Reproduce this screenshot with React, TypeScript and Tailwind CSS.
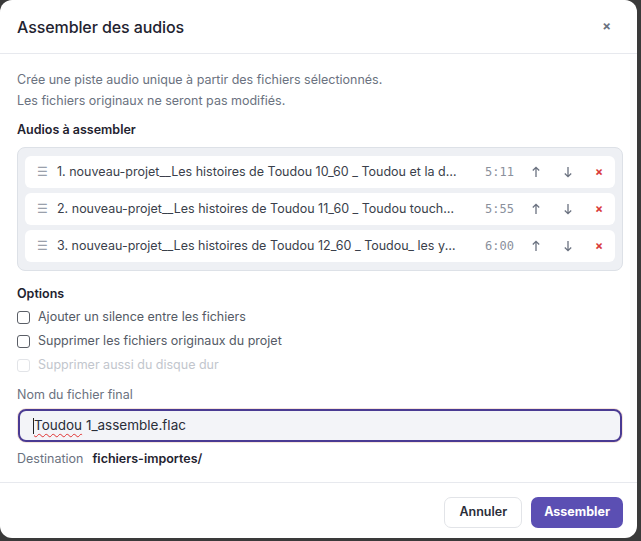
import React from "react";

const items = [
  { n: "1. nouveau-projet__Les histoires de Toudou 10_60 _ Toudou et la danse des étoiles.flac", d: "5:11" },
  { n: "2. nouveau-projet__Les histoires de Toudou 11_60 _ Toudou touche le ciel.flac", d: "5:55" },
  { n: "3. nouveau-projet__Les histoires de Toudou 12_60 _ Toudou_ les yeux fermés.flac", d: "6:00" },
];

function Up() {
  return (
    <svg width="10" height="12" viewBox="0 0 10 12" fill="none" stroke="#6b7280" strokeWidth="1.3">
      <path d="M5 11V1.5M1.8 4.5L5 1.3l3.2 3.2" />
    </svg>
  );
}
function Down() {
  return (
    <svg width="10" height="12" viewBox="0 0 10 12" fill="none" stroke="#6b7280" strokeWidth="1.3">
      <path d="M5 1v9.5M1.8 7.5L5 10.7l3.2-3.2" />
    </svg>
  );
}

export default function App() {
  return (
    <div className="w-[641px] h-[541px] bg-[#3a3a3a] overflow-hidden" style={{ fontFamily: "Inter, 'Noto Sans', sans-serif" }}>
      <div className="w-[637px] h-[538px] bg-white rounded-[12px] flex flex-col">
        <div className="h-[54px] border-b border-[#e7e9ee] flex items-center justify-between pl-[17px] pr-[26px] shrink-0">
          <div className="text-[16px] font-medium text-[#1f2330] tracking-[-0.1px]">Assembler des audios</div>
          <div className="text-[#6b7280] text-[13px] font-bold leading-none">×</div>
        </div>
        <div className="flex-1 px-[17px] pt-[15px] flex flex-col">
          <div className="text-[12.5px] text-[#6b7280] leading-[21px]">Crée une piste audio unique à partir des fichiers sélectionnés.</div>
          <div className="text-[12.5px] text-[#6b7280] leading-[21px]">Les fichiers originaux ne seront pas modifiés.</div>
          <div className="mt-[9px] text-[12.5px] font-semibold text-[#1f2330] leading-[20px]">Audios à assembler</div>
          <div className="mt-[7px] w-[606px] bg-[#eef0f4] border border-[#dde1e7] rounded-[8px] px-[7px] py-[8px] flex flex-col gap-[5px]">
            {items.map((it) => (
              <div key={it.d} className="h-[32px] bg-white rounded-[6px] flex items-center pl-[12px] pr-[12px]">
                <span className="text-[#9aa0ab] text-[12px] w-[20px] shrink-0">☰</span>
                <span className="text-[12.5px] text-[#3a3f4b] truncate w-[400px] shrink-0">{it.n}</span>
                <span className="ml-[28px] w-[32px] shrink-0 text-[12px] text-[#8a909c]" style={{ fontFamily: "'DejaVu Sans Mono', monospace" }}>{it.d}</span>
                <span className="ml-[14px] w-[10px] shrink-0 flex justify-center"><Up /></span>
                <span className="ml-[22px] w-[10px] shrink-0 flex justify-center"><Down /></span>
                <span className="ml-[22px] shrink-0 text-[#d93a3a] text-[12px] font-bold leading-none">×</span>
              </div>
            ))}
          </div>
          <div className="mt-[15px] text-[12.5px] font-semibold text-[#1f2330] leading-[16px]">Options</div>
          <div className="mt-[9px] flex flex-col gap-[11px]">
            {[
              { t: "Ajouter un silence entre les fichiers", dis: false },
              { t: "Supprimer les fichiers originaux du projet", dis: false },
              { t: "Supprimer aussi du disque dur", dis: true },
            ].map((o) => (
              <div key={o.t} className="flex items-center h-[13px]">
                <span className={`w-[13px] h-[13px] rounded-[3px] border ${o.dis ? "border-[#e2e4e8]" : "border-[#5a5e66]"} bg-white`} />
                <span className={`ml-[8px] text-[12.5px] ${o.dis ? "text-[#c2c6cd]" : "text-[#555b66]"}`}>{o.t}</span>
              </div>
            ))}
          </div>
          <div className="mt-[15px] text-[12.5px] text-[#6b7280] leading-[16px]">Nom du fichier final</div>
          <div className="mt-[5px] w-[606px] h-[35px] rounded-[9px] p-[1px] bg-[#f6e4dc]">
            <div className="w-full h-full rounded-[8px] border-2 border-[#4a3b93] bg-[#f3f4f8] flex items-center pl-[13px]">
              <span className="w-px h-[16px] bg-[#222]" />
              <span className="text-[13.5px] text-[#2a2e38] underline decoration-wavy decoration-[#e03131] decoration-1 underline-offset-[3px]">Toudou</span>
              <span className="text-[13.5px] text-[#2a2e38]">&nbsp;1_assemble.flac</span>
            </div>
          </div>
          <div className="mt-[8px] flex items-center text-[12.5px] leading-[16px]">
            <span className="text-[#6b7280]">Destination</span>
            <span className="ml-[9px] font-semibold text-[#1f2330]">fichiers-importes/</span>
          </div>
        </div>
        <div className="h-[56px] border-t border-[#e7e9ee] flex items-center justify-end gap-[9px] pr-[14px] pt-[3px] shrink-0">
          <div className="h-[31px] px-[14px] rounded-[7px] border border-[#e2e4e8] bg-white flex items-center text-[12.5px] font-semibold text-[#2a2e38]">Annuler</div>
          <div className="h-[31px] px-[13px] rounded-[7px] bg-[#5b4fb3] flex items-center text-[12.5px] font-bold text-white">Assembler</div>
        </div>
      </div>
    </div>
  );
}
